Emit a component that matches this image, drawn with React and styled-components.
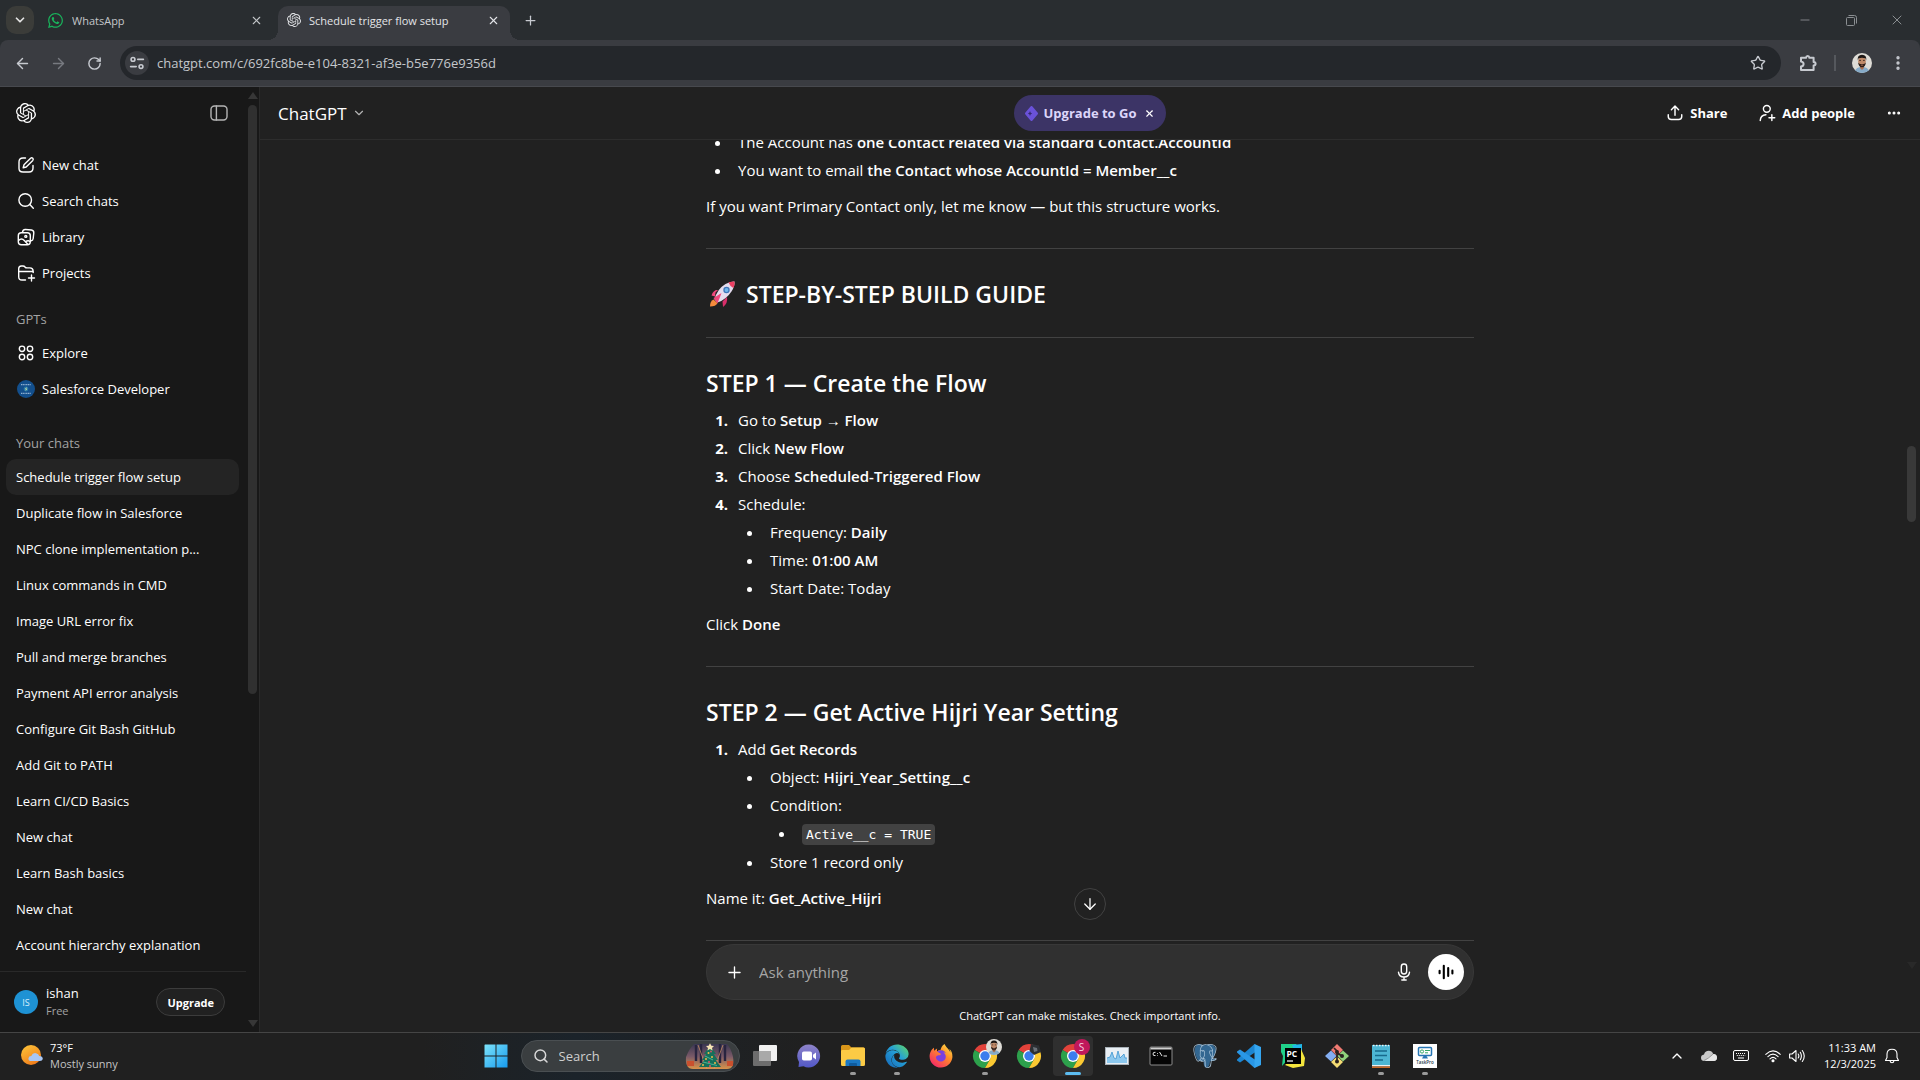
import React from 'react';
import styled, { createGlobalStyle } from 'styled-components';
import {
  ArrowDown,
  ArrowLeft,
  ArrowRight,
  ChevronDown,
  ChevronUp,
  Ellipsis,
  EllipsisVertical,
  Minus,
  Plus,
  RotateCw,
  Search,
  Star,
  X,
} from 'lucide-react';
import { FaEdge, FaFirefoxBrowser, FaWhatsapp } from 'react-icons/fa';
import { SiOpenai, SiPostgresql } from 'react-icons/si';

const GlobalStyle = createGlobalStyle`
  * {
    box-sizing: border-box;
  }
  body {
    margin: 0;
    background: #212121;
    color: #fff;
    font-family: "Open Sans", "Noto Sans", sans-serif;
    overflow: hidden;
  }
  button, input {
    font-family: inherit;
    color: inherit;
    border: 0;
    padding: 0;
    background: none;
  }
  a {
    color: inherit;
    text-decoration: none;
  }
`;

const Page = styled.div`
  display: flex;
  flex-direction: column;
  height: 100vh;
`;

/* ---------- browser ---------- */

const TabStrip = styled.div`
  display: flex;
  align-items: flex-end;
  height: 40px;
  padding-left: 6px;
  background: #292d30;
`;

const TabMenu = styled.button`
  display: flex;
  align-items: center;
  justify-content: center;
  width: 28px;
  height: 28px;
  margin-bottom: 6px;
  border-radius: 10px;
  background: #3b3c39;
  color: #e3e3e3;
`;

const Tab = styled.div`
  position: relative;
  display: flex;
  align-items: center;
  gap: 8px;
  width: ${({ $active }) => ($active ? '232px' : '244px')};
  height: 34px;
  padding: ${({ $active }) => ($active ? '0 9px 6px' : '0 14px 6px 13px')};
  border-radius: 10px 10px 0 0;
  background: ${({ $active }) => ($active ? '#3a3c41' : 'transparent')};
  color: ${({ $active }) => ($active ? '#e3e5e8' : '#c3c6c9')};
  font-size: 11px;
  &::before, &::after {
    content: "";
    display: ${({ $active }) => ($active ? 'block' : 'none')};
    position: absolute;
    bottom: 0;
    width: 10px;
    height: 10px;
  }
  &::before {
    left: -10px;
    background: radial-gradient(circle at 0 0, transparent 10px, #3a3c41 10px);
  }
  &::after {
    right: -10px;
    background: radial-gradient(circle at 100% 0, transparent 10px, #3a3c41 10px);
  }
`;

const TabTitle = styled.span`
  flex: 1;
  white-space: nowrap;
  overflow: hidden;
`;

const IconButton = styled.button`
  display: flex;
  align-items: center;
  justify-content: center;
  flex: none;
  width: ${({ $size }) => $size || 16}px;
  height: ${({ $size }) => $size || 16}px;
  color: ${({ $color }) => $color || 'inherit'};
`;

const NewTab = styled(IconButton)`
  margin: 0 0 12px 12px;
`;

const WindowButtons = styled.div`
  display: flex;
  margin-left: auto;
  color: #8b8f92;
`;

const WindowButton = styled.button`
  display: flex;
  align-items: center;
  justify-content: center;
  width: 46px;
  height: 40px;
`;

const Toolbar = styled.div`
  display: flex;
  align-items: center;
  height: 47px;
  padding: 0 4px;
  border-bottom: 1px solid #47494e;
  border-radius: 8px 8px 0 0;
  background: #3a3c41;
  color: #c7cad0;
`;

const ToolbarWrap = styled.div`
  background: #292d30;
`;

const Omnibox = styled.div`
  display: flex;
  align-items: center;
  flex: 1;
  gap: 8px;
  height: 34px;
  margin: 0 9px 0 8px;
  padding: 0 15px 0 5px;
  border-radius: 17px;
  background: #24272b;
`;

const SiteInfo = styled(IconButton)`
  border-radius: 50%;
  background: #3a3c41;
`;

const Url = styled.input`
  flex: 1;
  color: #c4c7cb;
  font-size: 13px;
  outline: none;
`;

const ToolbarDivider = styled.span`
  width: 2px;
  height: 16px;
  margin: 0 8px;
  background: #55585d;
`;

/* ---------- sidebar ---------- */

const Body = styled.div`
  display: flex;
  flex: 1;
  min-height: 0;
`;

const Sidebar = styled.aside`
  display: flex;
  width: 260px;
  flex: none;
  border-right: 1px solid #2a2a2a;
  background: #181818;
`;

const SidebarContent = styled.div`
  display: flex;
  flex-direction: column;
  flex: 1;
`;

const SidebarHeader = styled.div`
  display: flex;
  align-items: center;
  justify-content: space-between;
  height: 52px;
  padding: 0 17px 0 16px;
`;

const SidebarScroll = styled.nav`
  flex: 1;
  min-height: 0;
  overflow: hidden;
  padding: 8px 7px 0 6px;
`;

const SectionLabel = styled.h2`
  margin: ${({ $top }) => $top}px 0 0;
  padding: 0 10px;
  color: #a3a3a3;
  font-size: 13px;
  font-weight: 400;
  line-height: 32px;
`;

const NavItem = styled.a`
  display: flex;
  align-items: center;
  gap: 6px;
  height: 36px;
  padding: 0 10px;
  border-radius: 10px;
  background: ${({ $active }) => ($active ? '#242424' : 'transparent')};
  font-size: 13px;
  white-space: nowrap;
`;

const NavIcon = styled.span`
  display: flex;
  align-items: center;
  justify-content: center;
  width: 20px;
  height: 20px;
`;

const SidebarFooter = styled.div`
  display: flex;
  align-items: center;
  height: 61px;
  padding: 0 21px 0 14px;
  border-top: 1px solid #292929;
`;

const UserBadge = styled.span`
  display: flex;
  align-items: center;
  justify-content: center;
  width: 24px;
  height: 24px;
  border-radius: 50%;
  background: #1e92d4;
  color: #d9effb;
  font-size: 9px;
`;

const UserText = styled.div`
  flex: 1;
  margin-left: 8px;
  font-size: 13px;
  line-height: 18px;
`;

const Plan = styled.div`
  color: #a3a3a3;
  font-size: 11px;
`;

const UpgradeButton = styled.button`
  height: 28px;
  padding: 0 10px;
  border: 1px solid #3c3c3c;
  border-radius: 14px;
  background: #212121;
  font-size: 11px;
  font-weight: 700;
`;

const ScrollTrack = styled.div`
  display: flex;
  flex-direction: column;
  align-items: center;
  width: 13px;
  padding: 5px 2px;
`;

const ScrollThumb = styled.div`
  width: 9px;
  height: ${({ $height }) => $height};
  border-radius: 5px;
  background: ${({ $color }) => $color};
`;

const ScrollArrow = styled.div`
  border: 5px solid transparent;
  border-top: ${({ $down, $color }) => ($down ? `7px solid ${$color || '#373737'}` : '0')};
  border-bottom: ${({ $down }) => ($down ? '0' : '7px solid #373737')};
  margin: ${({ $down }) => ($down ? 'auto 0 0' : '0 0 6px')};
`;

/* ---------- conversation ---------- */

const Main = styled.main`
  position: relative;
  display: flex;
  flex-direction: column;
  flex: 1;
  min-width: 0;
  background: #212121;
`;

const MainHeader = styled.header`
  display: grid;
  grid-template-columns: 1fr auto 1fr;
  align-items: center;
  height: 53px;
  padding: 0 18px;
  border-bottom: 1px solid #2d2d2d;
`;

const ModelButton = styled.button`
  display: flex;
  align-items: center;
  justify-self: start;
  gap: 5px;
  font-size: 17px;
`;

const GoPill = styled.div`
  display: flex;
  align-items: center;
  gap: 5px;
  height: 36px;
  padding: 0 9px 0 11px;
  border-radius: 18px;
  background: #3c3466;
  color: #dcd6fa;
`;

const GoButton = styled.button`
  display: flex;
  align-items: center;
  gap: 6px;
  font-size: 13px;
  font-weight: 700;
`;

const HeaderActions = styled.div`
  display: flex;
  align-items: center;
  justify-self: end;
`;

const HeaderButton = styled.button`
  display: flex;
  align-items: center;
  gap: 6px;
  height: 36px;
  margin-right: 31px;
  font-size: 13px;
  font-weight: 700;
`;

const Scroller = styled.div`
  display: flex;
  flex-direction: column;
  justify-content: flex-end;
  align-items: center;
  flex: 1;
  min-height: 0;
  padding-bottom: 3px;
  overflow: hidden;
`;

const Prose = styled.article`
  width: 100%;
  max-width: 768px;
  font-size: 15px;
  line-height: 28px;
  p {
    margin: 8px 0 28px;
  }
  h2 {
    display: flex;
    align-items: center;
    gap: 8px;
    margin: 0 0 7px;
    font-size: 23px;
    font-weight: 600;
    line-height: 32px;
  }
  hr {
    height: 1px;
    margin: 27px 0 29px;
    border: 0;
    background: #424242;
  }
  hr:last-child {
    margin-bottom: 0;
  }
  ul, ol {
    margin: 0;
    padding-left: 26px;
  }
  ul {
    list-style: disc;
  }
  li {
    padding-left: 6px;
  }
  ol > li::marker {
    font-weight: 700;
  }
  strong {
    font-weight: 600;
  }
`;

const Code = styled.code`
  padding: 3px 4px;
  border-radius: 4px;
  background: #424242;
  font-family: "DejaVu Sans Mono", monospace;
  font-size: 13px;
  line-height: 26px;
`;

const Composer = styled.footer`
  position: relative;
  display: flex;
  flex-direction: column;
  align-items: center;
`;

const ScrollDown = styled.button`
  position: absolute;
  bottom: calc(100% + 24px);
  display: flex;
  align-items: center;
  justify-content: center;
  width: 32px;
  height: 32px;
  border: 1px solid #424242;
  border-radius: 50%;
  background: #212121;
`;

const Prompt = styled.form`
  display: flex;
  align-items: center;
  width: 100%;
  max-width: 768px;
  height: 56px;
  padding: 0 9px 0 17px;
  border: 1px solid #383838;
  border-radius: 28px;
  background: #303030;
`;

const PromptInput = styled.input`
  flex: 1;
  margin: 0 15px;
  font-size: 15px;
  outline: none;
  &::placeholder {
    color: #a6a6a6;
    opacity: 1;
  }
`;

const VoiceButton = styled.button`
  display: flex;
  align-items: center;
  justify-content: center;
  width: 36px;
  height: 36px;
  margin-left: 14px;
  border-radius: 50%;
  background: #fff;
`;

const Disclaimer = styled.p`
  margin: 0;
  font-size: 11px;
  line-height: 32px;
`;

const MainScroll = styled.div`
  position: absolute;
  top: 359px;
  right: 3px;
  bottom: 63px;
  display: flex;
  flex-direction: column;
`;

/* ---------- taskbar ---------- */

const Taskbar = styled.div`
  display: grid;
  grid-template-columns: 1fr auto 1fr;
  align-items: center;
  height: 48px;
  box-shadow: inset 0 1px #454545;
  background: linear-gradient(90deg, #202020 22%, #1b232a 30%, #202020 42%);
`;

const Weather = styled.button`
  display: flex;
  align-items: center;
  justify-self: start;
  gap: 6px;
  padding-left: 20px;
  font-size: 11px;
  line-height: 16px;
  text-align: left;
`;

const WeatherNote = styled.div`
  color: #c4c4c4;
`;

const TaskIcons = styled.div`
  display: flex;
  align-items: center;
`;

const TaskButton = styled.button`
  position: relative;
  display: flex;
  align-items: center;
  justify-content: center;
  width: 40px;
  height: 40px;
  margin: 0 2px;
  border-radius: 4px;
  background: ${({ $state }) => ($state === 'active' ? '#2f2f2f' : 'transparent')};
  &::after {
    content: "";
    position: absolute;
    bottom: 1px;
    display: ${({ $state }) => ($state ? 'block' : 'none')};
    width: ${({ $state }) => ($state === 'active' ? '16px' : '6px')};
    height: 3px;
    border-radius: 2px;
    background: ${({ $state }) => ($state === 'active' ? '#5cbcf0' : '#9a9a9a')};
  }
`;

const TaskSearch = styled.label`
  display: flex;
  align-items: center;
  gap: 10px;
  width: 219px;
  height: 32px;
  margin: 0 3px;
  padding: 0 4px 0 11px;
  border: 1px solid #4a4f52;
  border-radius: 16px;
  background: #3a3e40;
  color: #d8d8d8;
`;

const TaskSearchInput = styled.input`
  flex: 1;
  min-width: 0;
  font-size: 13px;
  outline: none;
  &::placeholder {
    color: #cfcfcf;
    opacity: 1;
  }
`;

const Tray = styled.div`
  display: flex;
  align-items: center;
  justify-self: end;
  gap: 16px;
  padding-right: 20px;
`;

const TrayGroup = styled.div`
  display: flex;
  align-items: center;
  gap: 8px;
`;

const Clock = styled.time`
  min-width: 55px;
  font-size: 11px;
  line-height: 16px;
  text-align: right;
`;

/* ---------- icons ---------- */

const Line = ({ size = 20, width = 1.4, children }) => (
  <svg
    width={size}
    height={size}
    viewBox="0 0 20 20"
    fill="none"
    stroke="currentColor"
    strokeWidth={width}
    strokeLinecap="round"
    strokeLinejoin="round"
    aria-hidden="true"
  >
    {children}
  </svg>
);

const PenIcon = () => (
  <Line>
    <path d="M9.5 3H7Q3 3 3 7V13.5Q3 17 7 17H13Q17 17 17 13V10.5" />
    <path d="M8 9.8L14.6 3.2Q15.7 2.3 16.8 3.3Q17.7 4.4 16.8 5.4L10.2 12L7.2 12.8Z" />
  </Line>
);

const SearchIcon = () => (
  <Line>
    <circle cx="9.2" cy="9" r="6.3" />
    <path d="M13.8 13.6L17.3 17.2" />
  </Line>
);

const LibraryIcon = () => (
  <Line>
    <path d="M6.5 5.2Q7 2.3 9.5 2.5L15.5 3Q18 3.3 17.8 6L17.2 11.5Q17 13.5 15.2 13.8" />
    <rect x="2.3" y="5.8" width="12" height="12" rx="3" />
    <circle cx="9.8" cy="9.4" r="1" />
    <path d="M2.8 13.3Q5.5 10.5 8.3 13.5L11.8 17.2M9.5 14.8Q11.8 12.8 14 14.3" />
  </Line>
);

const ProjectsIcon = () => (
  <Line>
    <path d="M9.5 17H6Q2.7 17 2.7 13.8V5.8Q2.7 3 5.4 3H7Q8.3 3 9 4Q9.7 4.9 11 4.9H14Q17 4.9 17.2 8.2V9.5M2.8 8.5H17" />
    <path d="M15.5 12V18M12.5 15H18.5" />
  </Line>
);

const ExploreIcon = () => (
  <Line>
    <circle cx="6" cy="5.8" r="2.7" />
    <circle cx="14" cy="5.8" r="2.7" />
    <circle cx="6" cy="14" r="2.7" />
    <circle cx="14" cy="14" r="2.7" />
  </Line>
);

const SalesforceIcon = () => (
  <svg width="18" height="18" viewBox="0 0 18 18" aria-hidden="true">
    <circle cx="9" cy="9" r="9" fill="#134f8c" />
    <path d="M4 4.6H14M4 13.4H14" stroke="#8fb0d0" strokeWidth="1.2" strokeDasharray="1.2 .5" />
    <circle cx="9" cy="9" r="2.4" fill="#2878a8" />
    <path d="M9.8 6.8L7.8 9.3H9L8.4 11.3L10.4 8.8H9.2Z" fill="#d8e6a0" />
  </svg>
);

const PanelIcon = () => (
  <Line>
    <rect x="2" y="3" width="16" height="14" rx="3.5" />
    <path d="M7.4 3V17" />
  </Line>
);

const ShareIcon = () => (
  <Line size={18} width={1.6}>
    <path d="M2.500 12V14Q2.500 17.300 6 17.300H14Q17.500 17.300 17.500 14V12M10 12.600V2.600M6 6.300L10 2.300L14 6.300" />
  </Line>
);

const PeopleIcon = () => (
  <Line size={18} width={1.6}>
    <circle cx="9.8" cy="5.4" r="3.8" />
    <path d="M2.500 18.300Q2.800 12.500 8.800 12M15.400 12V18.400M12.200 15.200H18.600" />
  </Line>
);

const MicIcon = () => (
  <Line>
    <rect x="7.3" y="2" width="5.4" height="10" rx="2.7" />
    <path d="M4.5 10.3Q5.2 15 10 15Q14.8 15 15.5 10.3M10 15V18M7.8 18H12.2" />
  </Line>
);

const VoiceIcon = () => (
  <svg width="20" height="20" viewBox="0 0 20 20" stroke="#000" strokeWidth="2.1" strokeLinecap="round" aria-hidden="true">
    <path d="M3.6 8.800V11.200M7.8 3.800V16.200M12.2 6V14M16.4 8.500V11.500" />
  </svg>
);

const GemIcon = () => (
  <svg width="13" height="15" viewBox="0 0 13 15" aria-hidden="true">
    <path d="M6.5 1L12 7.500L6.500 14L1 7.500Z" fill="#6a52d9" stroke="#6a52d9" strokeWidth="2" strokeLinejoin="round" />
    <path d="M5 5Q5.3 7.2 7.2 7.5Q5.3 7.8 5 10Q4.7 7.8 2.8 7.5Q4.7 7.2 5 5Z" fill="#35296f" />
  </svg>
);

const TuneIcon = () => (
  <Line size={16} width={2}>
    <circle cx="5" cy="5.5" r="2.4" />
    <path d="M11 5.5H18M2 14.5H9" />
    <circle cx="15" cy="14.5" r="2.4" />
  </Line>
);

const PuzzleIcon = () => (
  <Line width={2}>
    <path d="M3 4.800H8Q8.200 3 9.700 3Q11.200 3 11.400 4.800H15.600V9Q17.600 9.200 17.600 10.800Q17.600 12.400 15.600 12.600V17H3V13.600Q5.600 13.200 5.600 11Q5.600 8.800 3 8.400Z" />
  </Line>
);

const RestoreIcon = () => (
  <svg width="11" height="11" viewBox="0 0 11 11" fill="none" stroke="currentColor" aria-hidden="true">
    <rect x=".5" y="2.5" width="8" height="8" rx="1" />
    <path d="M2.5 .5H8.5Q10.5 .5 10.5 2.5V8.5" />
  </svg>
);

const Portrait = ({ size = 20 }) => (
  <svg width={size} height={size} viewBox="0 0 20 20" aria-hidden="true">
    <circle cx="10" cy="10" r="10" fill="#dedcd6" />
    <path d="M3 17.2Q5 14.2 8 14H12Q15 14.2 17 17.2Q14 20 10 20Q6 20 3 17.2Z" fill="#86abc8" />
    <path d="M8 12H12V15L10 17L8 15Z" fill="#a87152" />
    <ellipse cx="10" cy="8.3" rx="3.8" ry="5" fill="#c08a68" />
    <path d="M5.800 7.500Q5 2 10 1.800Q15 2 14.200 7.500L13.400 5.200Q10 4.200 6.600 5.200Z" fill="#1d1714" />
    <path d="M6.200 9.500Q6.500 14 10 14.300Q13.500 14 13.800 9.500Q12.800 11.400 10 11.200Q7.200 11.400 6.200 9.500Z" fill="#2b1d17" />
    <path d="M7.2 7.4H9M11 7.4H12.8" stroke="#2b1d17" strokeWidth=".8" />
    <path d="M8.8 12.3H11.2" stroke="#b5735c" strokeWidth=".7" />
  </svg>
);

const Rocket = () => (
  <svg width="32" height="28" viewBox="0 0 32 28" aria-hidden="true">
    <path d="M9.5 12.5L12 10Q7.5 9.5 5.5 15.5L9 16.5Z" fill="#f0487c" />
    <path d="M19.5 18.5L16.5 21.5L17 27Q22 23.5 21 17Z" fill="#d92e6a" />
    <path d="M4 26.5Q4 21 7.5 19.5L11.5 23Q10 26.5 4 26.5Z" fill="#f58b3c" />
    <path d="M8.5 19.5Q11 9 19.5 4Q24.5 1.2 28.5 1.5Q29 6 25.5 11.5Q20 19.8 11.5 22.5Z" fill="#e4dcee" />
    <path d="M22.5 2.6Q26 1.3 28.5 1.5Q29 4.6 27.4 8Q24 6.5 22.5 2.6Z" fill="#ec3f62" />
    <path d="M7.5 18L15.5 13L11.5 23.5Z" fill="#f0487c" />
    <circle cx="20.5" cy="10" r="3.2" fill="#3f76ba" />
    <circle cx="20.5" cy="10" r="1.9" fill="#6fb7ec" />
  </svg>
);

const WeatherIcon = () => (
  <svg width="24" height="24" viewBox="0 0 24 24" aria-hidden="true">
    <defs>
      <linearGradient id="sun" x1="0" y1="0" x2=".6" y2="1">
        <stop offset="0" stopColor="#ffc83a" />
        <stop offset="1" stopColor="#ef7d1c" />
      </linearGradient>
    </defs>
    <circle cx="11" cy="11" r="10" fill="url(#sun)" />
    <path d="M11.5 17Q8.4 17 8.4 14.4Q8.6 12 11.3 12Q12.6 8.6 16 9.2Q18.8 9.6 19.2 12Q22.8 12.2 22.8 15Q22.4 17 19.8 17Z" fill="#a9c7f4" />
  </svg>
);

const WindowsIcon = () => (
  <svg width="24" height="24" viewBox="0 0 24 24" fill="url(#win)" aria-hidden="true">
    <defs>
      <linearGradient id="win" x1="0" y1="0" x2="24" y2="24" gradientUnits="userSpaceOnUse">
        <stop offset="0" stopColor="#7fe5fb" />
        <stop offset="1" stopColor="#1499ee" />
      </linearGradient>
    </defs>
    <path d="M1 .5H11.5V11.5H.5V1ZM12.5 .5H23.5V11.5H12.5ZM.5 12.5H11.5V23.5H.5ZM12.5 12.5H23.5V23.5H12.5Z" />
  </svg>
);

const TreeArt = () => (
  <svg width="50" height="26" viewBox="0 0 50 26" aria-hidden="true">
    <defs>
      <linearGradient id="room" x1="0" y1="0" x2="0" y2="1">
        <stop offset="0" stopColor="#3a3752" />
        <stop offset=".5" stopColor="#7a5a68" />
        <stop offset="1" stopColor="#d8934a" />
      </linearGradient>
    </defs>
    <path d="M9 1H42Q46 5 48 14Q50 26 42 26H8Q0 26 1 14Q4 6 9 1Z" fill="url(#room)" />
    <path d="M11 2V18M16 1V20M35 1V20M40 2V18" stroke="#28243f" strokeWidth="2.4" />
    <path d="M2 18H9V23H2ZM42 18H48V23H42Z" fill="#c9502e" />
    <path d="M13 2L22 26M38 2L29 26" stroke="#d99a67" strokeWidth=".7" />
    <path d="M25 3L31 11H28.6L33 17H30.6L36 24H14L19.400 17H17L21.400 11H19Z" fill="#15705a" />
    <path d="M25 .2L26.400 2.800L29 3L27 5L27.600 7.500L25 6L22.400 7.500L23 5L21 3L23.600 2.800Z" fill="#f6e3b4" />
    <g fill="#f0b94a">
      <circle cx="23.500" cy="10" r="1" /><circle cx="27" cy="14" r="1" /><circle cx="21" cy="16" r="1" />
      <circle cx="30" cy="20" r="1" /><circle cx="18" cy="22" r="1" />
    </g>
    <g fill="#e0526a">
      <circle cx="26" cy="8.500" r=".9" /><circle cx="24" cy="19" r="1" /><circle cx="25" cy="23" r="1" />
    </g>
    <path d="M20 13L28 17M18 19L32 22.500" stroke="#5fc0a0" strokeWidth=".8" />
  </svg>
);

const TaskViewIcon = () => (
  <svg width="24" height="24" viewBox="0 0 24 24" aria-hidden="true">
    <rect x="6" y="1" width="18" height="16" rx="1" fill="#f1f1f1" />
    <rect x="0" y="7" width="18" height="15" rx="1" fill="#6d6d6d" />
    <path d="M6 7H18V17H6Z" fill="#a9a9a9" />
  </svg>
);

const ChatIcon = () => (
  <svg width="24" height="24" viewBox="0 0 24 24" aria-hidden="true">
    <defs>
      <linearGradient id="meet" x1="0" y1="0" x2="0" y2="1">
        <stop offset="0" stopColor="#8e83c8" />
        <stop offset="1" stopColor="#5258c8" />
      </linearGradient>
    </defs>
    <path d="M12 .5A11.500 11.500 0 1 1 6.500 22.300L1.500 23L2 18A11.500 11.500 0 0 1 12 .5Z" fill="url(#meet)" />
    <rect x="5" y="7.500" width="10" height="9" rx="1.800" fill="#fff" />
    <path d="M16 10.800L19 8.500V15.500L16 13.200Z" fill="#fff" />
  </svg>
);

const FolderIcon = () => (
  <svg width="24" height="24" viewBox="0 0 24 24" aria-hidden="true">
    <path d="M0 2.500Q0 1 1.500 1H8L10.500 3.500H22.500Q24 3.500 24 5V10H0Z" fill="#d9961a" />
    <path d="M0 7Q0 6 1.500 6H8L10.500 3.500H22.500Q24 3.500 24 5V20.500Q24 22 22.500 22H1.500Q0 22 0 20.500Z" fill="#fccb45" />
    <path d="M4.500 22V17.500Q4.500 15.500 6.500 15.500H17.500Q19.500 15.500 19.500 17.500V22Z" fill="#1a78c4" />
    <path d="M8 22V20Q8 19 9 19H15Q16 19 16 20V22Z" fill="#0f5c9f" />
  </svg>
);

const EdgeIcon = () => (
  <>
    <svg width="0" height="0" aria-hidden="true">
      <defs>
        <linearGradient id="edge" x1="0" y1="1" x2="1" y2="0">
          <stop offset="0" stopColor="#1566b8" />
          <stop offset=".55" stopColor="#259fd6" />
          <stop offset="1" stopColor="#65dc5e" />
        </linearGradient>
      </defs>
    </svg>
    <FaEdge size={24} fill="url(#edge)" />
  </>
);

const FirefoxIcon = () => (
  <svg width="24" height="24" viewBox="0 0 24 24" aria-hidden="true">
    <defs>
      <linearGradient id="fox" x1="1" y1="0" x2=".2" y2="1">
        <stop offset="0" stopColor="#fff04a" />
        <stop offset=".45" stopColor="#ff8a2a" />
        <stop offset="1" stopColor="#f5246b" />
      </linearGradient>
    </defs>
    <circle cx="12" cy="12.500" r="6.500" fill="#7a3fe0" />
    <FaFirefoxBrowser size={24} fill="url(#fox)" />
  </svg>
);

const PostgresIcon = () => (
  <svg width="24" height="24" viewBox="0 0 24 24" aria-hidden="true">
    <path d="M5 .8Q9 .2 12 1.300Q17 -.4 20.500 1.500Q23.500 4 22.500 8Q21.500 12 19.500 14.500L22.500 15.500Q21 17.500 17 17.300L16.500 21Q15 24 12.500 23.500Q10.800 23 10.500 17L6.500 17Q3.500 16 2 9Q.5 2.500 5 .8Z" fill="#336791" />
    <SiPostgresql size={24} color="#a8c3d8" />
  </svg>
);

const ChromeIcon = ({ children }) => (
  <svg width="30" height="30" viewBox="-3 -3 30 30" aria-hidden="true">
    <path d="M12 12L1.600 6A12 12 0 0 1 22.400 6Z" fill="#e2423a" />
    <path d="M12 12L1.600 6A12 12 0 0 0 12 24L17.200 15Z" fill="#2da14c" />
    <path d="M22.400 6A12 12 0 0 1 12 24L17.200 15L17.200 9L12 6Z" fill="#fbc932" />
    <path d="M12 6H22.400L17 12Z" fill="#fbc932" />
    <circle cx="12" cy="12" r="6" fill="#fff" />
    <circle cx="12" cy="12" r="4.700" fill="#3b7ded" />
    {children}
  </svg>
);

const ProfileLetter = styled.span`
  position: absolute;
  top: 3px;
  right: 3px;
  width: 16px;
  height: 16px;
  border-radius: 50%;
  background: #c0185b;
  color: #f6d5e3;
  font-size: 10px;
  line-height: 16px;
`;

const ProfileFace = styled.span`
  position: absolute;
  top: 3px;
  right: 3px;
  display: flex;
`;

const MonitorIcon = () => (
  <svg width="24" height="24" viewBox="0 0 24 24" aria-hidden="true">
    <rect x=".5" y="3.500" width="23" height="17" fill="#e9eff4" stroke="#a8b1b8" />
    <path d="M2 19V14L5 13L7 8L9 14L11 15L13 7L15 14L17 12L19 10L20 14L22 14V19Z" fill="#8cc8ee" />
    <path d="M2 14L5 13L7 8L9 14L11 15L13 7L15 14L17 12L19 10L20 14H22" fill="none" stroke="#3d94cf" strokeWidth=".8" />
  </svg>
);

const TerminalIcon = () => (
  <svg width="24" height="24" viewBox="0 0 24 24" aria-hidden="true">
    <rect x="1" y="3" width="22" height="18" rx="1" fill="#050505" stroke="#8c8c8c" />
    <path d="M1.500 4.500H22.500" stroke="#cfcfcf" strokeWidth="2" />
    <path d="M6.500 8.300Q4 7.800 4 10Q4 12.200 6.500 11.500M8.500 9V9.800M8.500 11V11.600M10.500 8L13 12M14.500 12H18" fill="none" stroke="#e8e8e8" />
  </svg>
);

const VsCodeIcon = () => (
  <svg width="24" height="24" viewBox="0 0 24 24" aria-hidden="true">
    <path d="M17.500 0L20 2.500V7L3 18.500L0 16.500V15.500Z" fill="#1c86d2" />
    <path d="M17.500 24L20 21.500V17L3 5.500L0 7.500V8.500Z" fill="#2997e6" />
    <path d="M17.500 0L24 3V21L17.500 24Z" fill="#35a6f0" />
  </svg>
);

const PyCharmIcon = () => (
  <svg width="24" height="24" viewBox="0 0 24 24" aria-hidden="true">
    <path d="M0 0H15L19 5L8 14L1 22L2 12L0 8Z" fill="#20d18a" />
    <path d="M11 1L21 0L21 10L14 8Z" fill="#21b8e8" />
    <path d="M20 5L24 14L23 22L12 24L4 21L14 12Z" fill="#f4e53c" />
    <rect x="4" y="4" width="16" height="16" fill="#000" />
    <text x="5.500" y="12.500" fill="#fff" fontSize="8.500" fontWeight="700" fontFamily="Open Sans, sans-serif">PC</text>
    <path d="M6 17H12" stroke="#fff" strokeWidth="1.200" />
  </svg>
);

const GitIcon = () => (
  <svg width="24" height="24" viewBox="0 0 24 24" aria-hidden="true">
    <path d="M12 0L18 6L12 12L6 6Z" fill="#f07a72" />
    <path d="M6 6.500L11.500 12L6 17.500L0 12Z" fill="#84aef2" />
    <path d="M18 6.500L24 12L18 17.500L12.500 12Z" fill="#8fd17c" />
    <path d="M12 12.500L18 18L12 24L6 18Z" fill="#f5dc74" />
    <path d="M9 4L12 7V17M12 9L17 12" fill="none" stroke="#29211f" strokeWidth="1.700" />
    <circle cx="12" cy="8" r="2" fill="#29211f" /><circle cx="12" cy="17.500" r="2" fill="#29211f" /><circle cx="17" cy="12" r="2" fill="#29211f" />
  </svg>
);

const NotepadIcon = () => (
  <svg width="24" height="24" viewBox="0 0 24 24" aria-hidden="true">
    <path d="M3 1H21V21H3Z" fill="#4db6d4" />
    <path d="M4 1.500H20" stroke="#e9f7fb" strokeWidth="1.500" strokeDasharray="1.500 1.500" />
    <path d="M3 21H21V22.500H3Z" fill="#efefef" />
    <path d="M3 22.500H21V24H3Z" fill="#c96a28" />
    <path d="M6 7H18M6 11.500H18M6 16H14" stroke="#176a8c" strokeWidth="1.500" />
  </svg>
);

const TaskProIcon = () => (
  <svg width="24" height="24" viewBox="0 0 24 24" aria-hidden="true">
    <path d="M0 0H24V24H0Z" fill="#fff" />
    <rect x="5.500" y="3.500" width="13" height="8" rx="1" fill="none" stroke="#2676b4" strokeWidth="1.500" />
    <path d="M9 14.500L10.500 12H13.500L15 14.500Z" fill="#2676b4" />
    <circle cx="9" cy="7.500" r="1.600" fill="none" stroke="#35a868" />
    <path d="M12 6.500H17M12 8.800H15" stroke="#35a868" />
    <text x="12" y="19.500" fill="#26384a" fontSize="4.500" fontWeight="600" textAnchor="middle" fontFamily="Open Sans, sans-serif">TaskPro</text>
  </svg>
);

const CloudIcon = () => (
  <svg width="16" height="16" viewBox="0 0 16 16" aria-hidden="true">
    <path d="M3.500 13Q0 13 0 9.800Q0 7 3 6.500Q4 2.800 7.800 2.800Q11 2.800 12.200 6Q16 6.300 16 9.600Q16 13 12.500 13Z" fill="#c9c9c9" />
    <path d="M4 13L12.200 6Q16 6.300 16 9.600Q16 13 12.500 13Z" fill="#e8e8e8" />
    <path d="M3 12.500Q7 11 12.200 6" fill="none" stroke="#8a8a8a" strokeWidth=".8" />
  </svg>
);

const KeyboardIcon = () => (
  <svg width="16" height="16" viewBox="0 0 16 16" fill="none" stroke="#fff" aria-hidden="true">
    <rect x=".5" y="2.500" width="15" height="10" rx="1.500" />
    <path d="M3 5.500H13M3.800 7.500H12.200" strokeDasharray="1 1" />
    <path d="M5 10H11" />
  </svg>
);

const WifiIcon = () => (
  <svg width="16" height="16" viewBox="0 0 16 16" fill="none" stroke="#fff" strokeWidth="1.100" strokeLinecap="round" aria-hidden="true">
    <path d="M.8 6.300Q8-.6 15.200 6.300M2.900 8.600Q8 3.600 13.100 8.600M5 10.900Q8 7.900 11 10.900" />
    <circle cx="8" cy="12.700" r="1" fill="#fff" />
  </svg>
);

const SpeakerIcon = () => (
  <svg width="16" height="16" viewBox="0 0 16 16" fill="none" stroke="#fff" strokeWidth="1.100" strokeLinecap="round" strokeLinejoin="round" aria-hidden="true">
    <path d="M.6 6V10H3L7 13.500V2.500L3 6ZM9.200 6Q10.500 8 9.200 10M11.300 4.300Q13.500 8 11.300 11.700M13.300 2.500Q17.200 8 13.300 13.500" />
  </svg>
);

const BellIcon = () => (
  <svg width="16" height="16" viewBox="0 0 16 16" fill="none" stroke="#fff" strokeWidth="1.100" strokeLinejoin="round" aria-hidden="true">
    <path d="M1.500 12.500L3 9.500V6Q3.200 1.300 8 1.300Q12.800 1.300 13 6V9.500L14.500 12.500ZM6 12.700Q6.300 14.800 8 14.800Q9.700 14.800 10 12.700" />
  </svg>
);

/* ---------- data ---------- */

const navLinks = [
  { text: 'New chat', icon: <PenIcon /> },
  { text: 'Search chats', icon: <SearchIcon /> },
  { text: 'Library', icon: <LibraryIcon /> },
  { text: 'Projects', icon: <ProjectsIcon /> },
];

const gptLinks = [
  { text: 'Explore', icon: <ExploreIcon /> },
  { text: 'Salesforce Developer', icon: <SalesforceIcon /> },
];

const chats = [
  'Schedule trigger flow setup',
  'Duplicate flow in Salesforce',
  'NPC clone implementation p...',
  'Linux commands in CMD',
  'Image URL error fix',
  'Pull and merge branches',
  'Payment API error analysis',
  'Configure Git Bash GitHub',
  'Add Git to PATH',
  'Learn CI/CD Basics',
  'New chat',
  'Learn Bash basics',
  'New chat',
  'Account hierarchy explanation',
];

const apps = [
  { name: 'Task view', icon: <TaskViewIcon /> },
  { name: 'Chat', icon: <ChatIcon /> },
  { name: 'File Explorer', icon: <FolderIcon />, state: 'open' },
  { name: 'Edge', icon: <EdgeIcon />, state: 'open' },
  { name: 'Firefox', icon: <FirefoxIcon /> },
  {
    name: 'Chrome, personal',
    icon: (
      <>
        <ChromeIcon />
        <ProfileFace><Portrait size={16} /></ProfileFace>
      </>
    ),
    state: 'open',
  },
  {
    name: 'Chrome, second profile',
    icon: (
      <ChromeIcon>
        <path d="M14 0L22 1.500L24 8L17 11L12.500 7Z" fill="#2c2f33" />
        <path d="M16 3L20 4L20.500 7L17 8Z" fill="#6b7178" />
      </ChromeIcon>
    ),
  },
  {
    name: 'Chrome, work',
    icon: (
      <>
        <ChromeIcon />
        <ProfileLetter>S</ProfileLetter>
      </>
    ),
    state: 'active',
  },
  { name: 'Performance', icon: <MonitorIcon /> },
  { name: 'Command Prompt', icon: <TerminalIcon /> },
  { name: 'PostgreSQL', icon: <PostgresIcon /> },
  { name: 'Visual Studio Code', icon: <VsCodeIcon /> },
  { name: 'PyCharm', icon: <PyCharmIcon /> },
  { name: 'Git', icon: <GitIcon /> },
  { name: 'Notepad', icon: <NotepadIcon />, state: 'open' },
  { name: 'TaskPro', icon: <TaskProIcon />, state: 'open' },
];

/* ---------- sections ---------- */

const Browser = () => (
  <>
    <TabStrip>
      <TabMenu aria-label="Search tabs"><ChevronDown size={14} strokeWidth={3} /></TabMenu>
      <Tab>
        <FaWhatsapp size={17} color="#19b25b" />
        <TabTitle>WhatsApp</TabTitle>
        <IconButton aria-label="Close tab"><X size={13} /></IconButton>
      </Tab>
      <Tab $active>
        <SiOpenai size={14} />
        <TabTitle>Schedule trigger flow setup</TabTitle>
        <IconButton aria-label="Close tab"><X size={13} /></IconButton>
      </Tab>
      <NewTab aria-label="New tab" $color="#c7cad0"><Plus size={15} /></NewTab>
      <WindowButtons>
        <WindowButton aria-label="Minimize"><Minus size={14} strokeWidth={1.5} /></WindowButton>
        <WindowButton aria-label="Restore"><RestoreIcon /></WindowButton>
        <WindowButton aria-label="Close"><X size={16} strokeWidth={1.500} /></WindowButton>
      </WindowButtons>
    </TabStrip>
    <ToolbarWrap>
      <Toolbar>
        <IconButton $size={36} aria-label="Back"><ArrowLeft size={17} /></IconButton>
        <IconButton $size={36} $color="#777a80" aria-label="Forward"><ArrowRight size={17} /></IconButton>
        <IconButton $size={36} aria-label="Reload"><RotateCw size={15} strokeWidth={2.300} /></IconButton>
        <Omnibox>
          <SiteInfo $size={24} aria-label="Site information"><TuneIcon /></SiteInfo>
          <Url aria-label="Address" defaultValue="chatgpt.com/c/692fc8be-e104-8321-af3e-b5e776e9356d" />
          <IconButton aria-label="Bookmark"><Star size={16} /></IconButton>
        </Omnibox>
        <IconButton $size={36} aria-label="Extensions"><PuzzleIcon /></IconButton>
        <ToolbarDivider />
        <IconButton $size={36} aria-label="Profile"><Portrait /></IconButton>
        <IconButton $size={36} aria-label="Menu"><EllipsisVertical size={18} strokeWidth={2.500} /></IconButton>
      </Toolbar>
    </ToolbarWrap>
  </>
);

const SideNav = () => (
  <Sidebar>
    <SidebarContent>
      <SidebarHeader>
        <SiOpenai size={20} />
        <IconButton $size={20} $color="#b4b4b4" aria-label="Close sidebar"><PanelIcon /></IconButton>
      </SidebarHeader>
      <SidebarScroll>
        {navLinks.map((link) => (
          <NavItem key={link.text} href="#">
            <NavIcon>{link.icon}</NavIcon>
            {link.text}
          </NavItem>
        ))}
        <SectionLabel $top={12}>GPTs</SectionLabel>
        {gptLinks.map((link) => (
          <NavItem key={link.text} href="#">
            <NavIcon>{link.icon}</NavIcon>
            {link.text}
          </NavItem>
        ))}
        <SectionLabel $top={20}>Your chats</SectionLabel>
        {chats.map((chat, index) => (
          <NavItem key={`${chat}${index}`} href="#" $active={index === 0}>
            {chat}
          </NavItem>
        ))}
      </SidebarScroll>
      <SidebarFooter>
        <UserBadge>IS</UserBadge>
        <UserText>
          ishan
          <Plan>Free</Plan>
        </UserText>
        <UpgradeButton>Upgrade</UpgradeButton>
      </SidebarFooter>
    </SidebarContent>
    <ScrollTrack>
      <ScrollArrow />
      <ScrollThumb $height="63%" $color="#303030" />
      <ScrollArrow $down />
    </ScrollTrack>
  </Sidebar>
);

const Conversation = () => (
  <Prose>
    <ul>
      <li>The Account has <strong>one Contact related via standard Contact.AccountId</strong></li>
      <li>You want to email <strong>the Contact whose AccountId = Member__c</strong></li>
    </ul>
    <p>If you want Primary Contact only, let me know — but this structure works.</p>
    <hr />
    <h2><Rocket />STEP-BY-STEP BUILD GUIDE</h2>
    <hr />
    <h2>STEP 1 — Create the Flow</h2>
    <ol>
      <li>Go to <strong>Setup → Flow</strong></li>
      <li>Click <strong>New Flow</strong></li>
      <li>Choose <strong>Scheduled-Triggered Flow</strong></li>
      <li>
        Schedule:
        <ul>
          <li>Frequency: <strong>Daily</strong></li>
          <li>Time: <strong>01:00 AM</strong></li>
          <li>Start Date: Today</li>
        </ul>
      </li>
    </ol>
    <p>Click <strong>Done</strong></p>
    <hr />
    <h2>STEP 2 — Get Active Hijri Year Setting</h2>
    <ol>
      <li>
        Add <strong>Get Records</strong>
        <ul>
          <li>Object: <strong>Hijri_Year_Setting__c</strong></li>
          <li>
            Condition:
            <ul>
              <li><Code>Active__c = TRUE</Code></li>
            </ul>
          </li>
          <li>Store 1 record only</li>
        </ul>
      </li>
    </ol>
    <p>Name it: <strong>Get_Active_Hijri</strong></p>
    <hr />
  </Prose>
);

const ChatPane = () => (
  <Main>
    <MainHeader>
      <ModelButton>
        ChatGPT
        <ChevronDown size={14} color="#b4b4b4" />
      </ModelButton>
      <GoPill>
        <GoButton><GemIcon />Upgrade to Go</GoButton>
        <IconButton aria-label="Dismiss" $color="#fff"><X size={11} strokeWidth={2.500} /></IconButton>
      </GoPill>
      <HeaderActions>
        <HeaderButton><ShareIcon />Share</HeaderButton>
        <HeaderButton><PeopleIcon />Add people</HeaderButton>
        <IconButton aria-label="More"><Ellipsis size={18} strokeWidth={2.500} /></IconButton>
      </HeaderActions>
    </MainHeader>
    <Scroller>
      <Conversation />
    </Scroller>
    <Composer>
      <ScrollDown aria-label="Scroll to bottom"><ArrowDown size={18} strokeWidth={1.700} /></ScrollDown>
      <Prompt>
        <IconButton type="button" $size={20} aria-label="Add files"><Plus size={19} strokeWidth={1.700} /></IconButton>
        <PromptInput aria-label="Ask anything" placeholder="Ask anything" />
        <IconButton type="button" $size={20} aria-label="Dictate"><MicIcon /></IconButton>
        <VoiceButton type="button" aria-label="Use voice mode"><VoiceIcon /></VoiceButton>
      </Prompt>
      <Disclaimer>ChatGPT can make mistakes. Check important info.</Disclaimer>
    </Composer>
    <MainScroll>
      <ScrollThumb $height="76px" $color="#393939" />
      <ScrollArrow $down $color="#292929" />
    </MainScroll>
  </Main>
);

const WindowsBar = () => (
  <Taskbar>
    <Weather>
      <WeatherIcon />
      <div>
        73°F
        <WeatherNote>Mostly sunny</WeatherNote>
      </div>
    </Weather>
    <TaskIcons>
      <TaskButton aria-label="Start"><WindowsIcon /></TaskButton>
      <TaskSearch>
        <Search size={16} strokeWidth={2.200} />
        <TaskSearchInput aria-label="Search" placeholder="Search" />
        <TreeArt />
      </TaskSearch>
      {apps.map((app) => (
        <TaskButton key={app.name} aria-label={app.name} $state={app.state}>
          {app.icon}
        </TaskButton>
      ))}
    </TaskIcons>
    <Tray>
      <ChevronUp size={16} />
      <CloudIcon />
      <KeyboardIcon />
      <TrayGroup>
        <WifiIcon />
        <SpeakerIcon />
      </TrayGroup>
      <TrayGroup>
        <Clock>
          11:33 AM
          <br />
          12/3/2025
        </Clock>
        <BellIcon />
      </TrayGroup>
    </Tray>
  </Taskbar>
);

const App = () => (
  <Page>
    <GlobalStyle />
    <Browser />
    <Body>
      <SideNav />
      <ChatPane />
    </Body>
    <WindowsBar />
  </Page>
);

export default App;
